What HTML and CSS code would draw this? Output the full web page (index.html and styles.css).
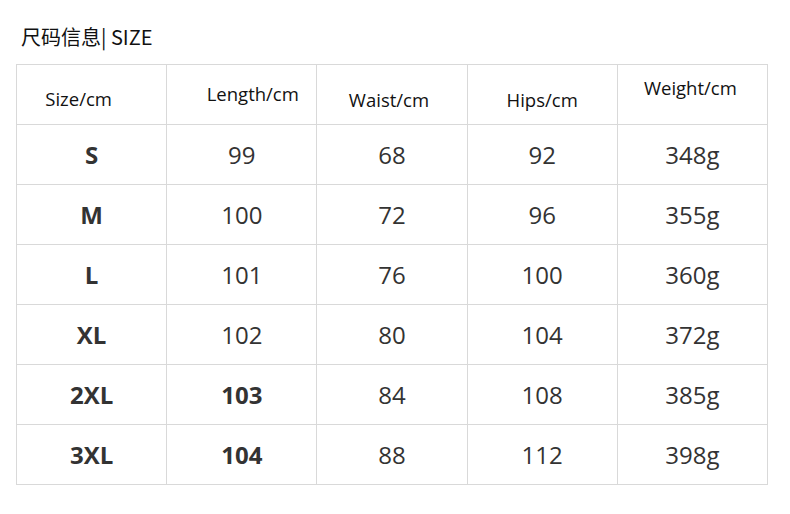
FILE: index.html
```html
<!DOCTYPE html>
<html lang="zh">
<head>
<meta charset="utf-8">
<title>尺码信息</title>
<link rel="stylesheet" href="styles.css">
</head>
<body>
<div class="page">
  <h1 class="title">尺码信息| SIZE</h1>
  <table class="size-table">
    <tr class="head">
      <th class="h-size">Size/cm</th>
      <th class="h-length">Length/cm</th>
      <th class="h-waist">Waist/cm</th>
      <th class="h-hips">Hips/cm</th>
      <th class="h-weight">Weight/cm</th>
    </tr>
    <tr><td class="b">S</td><td>99</td><td>68</td><td>92</td><td>348g</td></tr>
    <tr><td class="b">M</td><td>100</td><td>72</td><td>96</td><td>355g</td></tr>
    <tr><td class="b">L</td><td>101</td><td>76</td><td>100</td><td>360g</td></tr>
    <tr><td class="b">XL</td><td>102</td><td>80</td><td>104</td><td>372g</td></tr>
    <tr><td class="b">2XL</td><td class="b">103</td><td>84</td><td>108</td><td>385g</td></tr>
    <tr><td class="b">3XL</td><td class="b">104</td><td>88</td><td>112</td><td>398g</td></tr>
  </table>
</div>
</body>
</html>
```
FILE: styles.css
```css
html, body {
  margin: 0;
  padding: 0;
  background: #ffffff;
}
.page {
  padding: 23px 0 0 16px;
  font-family: "Open Sans", "Noto Sans CJK SC", sans-serif;
}
.title {
  margin: 0 0 14px 5px;
  font-size: 20px;
  font-weight: 400;
  line-height: 27px;
  color: #111;
  font-family: "Noto Sans CJK SC", "Open Sans", sans-serif;
}
.size-table {
  border-collapse: collapse;
  table-layout: fixed;
  width: 752px;
}
.size-table th,
.size-table td {
  width: 150px;
  height: 59px;
  padding: 0;
  border: 1px solid #d9d9d9;
  text-align: center;
  vertical-align: middle;
}
.size-table th {
  box-sizing: border-box;
  height: 60px;
  font-weight: 400;
  font-size: 18.5px;
  color: #111;
}
.size-table td {
  font-size: 24px;
  color: #333;
}
.size-table td.b {
  font-weight: 700;
}
.h-size { padding: 7px 26px 0 0 !important; }
.h-length { padding: 0 0 2px 22px !important; }
.h-waist { padding: 10px 6px 0 0 !important; }
.h-hips { padding: 10px 0 0 0 !important; }
.h-weight { padding: 0 4px 14px 0 !important; }
```
